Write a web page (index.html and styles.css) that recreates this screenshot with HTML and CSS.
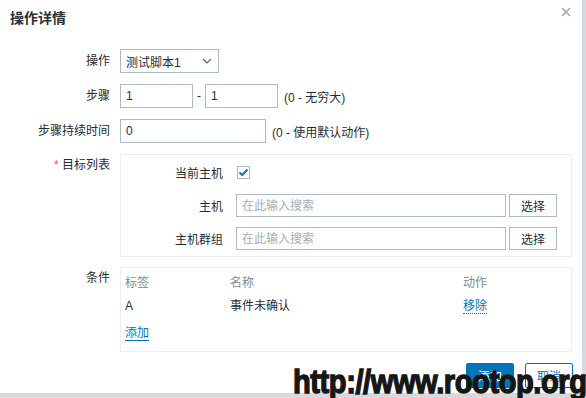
FILE: index.html
```html
<!DOCTYPE html>
<html lang="zh-CN">
<head>
  <meta charset="UTF-8">
  <title>操作详情</title>
  <link rel="stylesheet" href="styles.css">
</head>
<body>
  <div class="modal">
    <div class="modal-head">
      <h2 class="modal-title">操作详情</h2>
      <button class="close-btn" type="button">
        <svg width="10" height="10" viewBox="0 0 10 10"><path d="M1 1L9 9M9 1L1 9" stroke="#a0a8ad" stroke-width="1.6"/></svg>
      </button>
    </div>

    <form class="form">
      <!-- operation -->
      <div class="row">
        <label class="label">操作</label>
        <div class="field">
          <div class="select">
            <span>测试脚本1</span>
            <svg width="10" height="6" viewBox="0 0 10 6"><path d="M1 1L5 5L9 1" fill="none" stroke="#5a6a73" stroke-width="1.2"/></svg>
          </div>
        </div>
      </div>

      <!-- steps -->
      <div class="row">
        <label class="label">步骤</label>
        <div class="field">
          <input class="input input-step" value="1">
          <span class="dash">-</span>
          <input class="input input-step" value="1">
          <span class="hint">(0 - 无穷大)</span>
        </div>
      </div>

      <div class="row">
        <label class="label">步骤持续时间</label>
        <div class="field">
          <input class="input input-duration" value="0">
          <span class="hint">(0 - 使用默认动作)</span>
        </div>
      </div>

      <!-- targets -->
      <div class="row row-top">
        <label class="label label-box"><span class="req">*</span> 目标列表</label>
        <div class="box targets">
          <div class="sub-row">
            <span class="sub-label">当前主机</span>
            <span class="checkbox">
              <svg width="11" height="9" viewBox="0 0 11 9"><path d="M1.5 4.5L4.2 7L9.5 1.5" fill="none" stroke="#1f6fa8" stroke-width="2"/></svg>
            </span>
          </div>
          <div class="sub-row">
            <span class="sub-label">主机</span>
            <input class="input input-search" placeholder="在此输入搜索">
            <button class="btn-select" type="button">选择</button>
          </div>
          <div class="sub-row">
            <span class="sub-label">主机群组</span>
            <input class="input input-search" placeholder="在此输入搜索">
            <button class="btn-select" type="button">选择</button>
          </div>
        </div>
      </div>

      <!-- conditions -->
      <div class="row row-top">
        <label class="label label-box">条件</label>
        <div class="box conditions">
          <div class="cond-row cond-head">
            <span>标签</span>
            <span>名称</span>
            <span>动作</span>
          </div>
          <div class="cond-row">
            <span>A</span>
            <span>事件未确认</span>
            <span><a href="#" class="link-dotted">移除</a></span>
          </div>
          <div class="cond-add">
            <a href="#" class="link">添加</a>
          </div>
        </div>
      </div>
    </form>

    <div class="modal-foot">
      <button class="btn btn-primary" type="button">添加</button>
      <button class="btn btn-alt" type="button">取消</button>
    </div>
  </div>

  <div class="watermark">http://www.rootop.org</div>
</body>
</html>
```

FILE: styles.css
```css
body {
  margin: 0;
  width: 586px;
  height: 398px;
  overflow: hidden;
  background: #d6dadd;
  font-family: Arial, "Liberation Sans", "Noto Sans CJK SC", sans-serif;
  font-size: 12px;
  color: #1f2c33;
  position: relative;
}

.modal {
  width: 582px;
  height: 393px;
  background: #fff;
  box-sizing: border-box;
}

.modal-head {
  display: flex;
  justify-content: space-between;
  align-items: flex-start;
  height: 49px;
}

.modal-title {
  margin: 0;
  padding: 9px 0 0 10px;
  font-size: 14px;
  font-weight: 600;
  line-height: 18px;
  color: #2b3338;
}

.close-btn {
  border: none;
  background: none;
  padding: 0;
  margin: 7px 11px 0 0;
  width: 10px;
  height: 10px;
  display: flex;
}

.form {
  display: flex;
  flex-direction: column;
  gap: 11px;
  padding-right: 10px;
}

.row {
  display: flex;
  align-items: center;
}

.row-top {
  align-items: flex-start;
}

.row-top + .row-top {
  margin-top: -1px;
}

.label {
  width: 110px;
  padding-right: 10px;
  text-align: right;
  flex-shrink: 0;
  line-height: 24px;
}

.label-box {
  line-height: 22px;
}

.req {
  color: #e45959;
}

.field {
  display: flex;
  align-items: center;
  height: 24px;
}

.select {
  width: 99px;
  height: 24px;
  box-sizing: border-box;
  border: 1px solid #acbbc2;
  display: flex;
  align-items: center;
  justify-content: space-between;
  padding: 0 6px 0 5px;
  color: #1f2c33;
}

.input {
  height: 24px;
  box-sizing: border-box;
  border: 1px solid #acbbc2;
  padding: 0 5px;
  font: inherit;
  color: #1f2c33;
  background: #fff;
  outline: none;
}

.input::placeholder {
  color: #a3aeb4;
}

.input-step {
  width: 73px;
}

.dash {
  margin: 0 4px;
}

.input-duration {
  width: 146px;
}

.hint {
  margin-left: 6px;
  color: #1f2c33;
}

.box {
  flex: 1;
  border: 1px solid #ebeef0;
  box-sizing: border-box;
}

.targets {
  display: flex;
  flex-direction: column;
  gap: 10px;
  padding: 6px 14px 6px 0;
}

.sub-row {
  display: flex;
  align-items: center;
  height: 23px;
}

.sub-label {
  width: 115px;
  padding-right: 13px;
  box-sizing: border-box;
  text-align: right;
  flex-shrink: 0;
}

.checkbox {
  width: 13px;
  height: 13px;
  box-sizing: border-box;
  border: 1px solid #acbbc2;
  display: flex;
  align-items: center;
  justify-content: center;
  margin-left: 1px;
}

.input-search {
  flex: 1;
  height: 23px;
}

.btn-select {
  margin-left: 3px;
  width: 48px;
  height: 23px;
  border: 1px solid #acbbc2;
  background: #fff;
  font: inherit;
  color: #1f2c33;
  padding: 0;
}

.conditions {
  padding: 4px 4px 7px;
}

.cond-row {
  display: grid;
  grid-template-columns: 105px 233px auto;
  line-height: 23px;
}

.cond-head {
  color: #768d99;
}

.cond-add {
  margin-top: 4px;
  line-height: 22px;
}

.link {
  color: #0275b8;
  text-decoration: none;
  border-bottom: 1px solid #0275b8;
}

.link-dotted {
  color: #0275b8;
  text-decoration: none;
  border-bottom: 1px dotted #0275b8;
}

.modal-foot {
  display: flex;
  justify-content: flex-end;
  gap: 11px;
  padding: 11px 9px 0 0;
}

.btn {
  width: 48px;
  height: 25px;
  font: inherit;
  padding: 0;
  border-radius: 2px;
}

.btn-primary {
  background: #0275b8;
  border: 1px solid #0275b8;
  color: #fff;
}

.btn-alt {
  background: #fff;
  border: 1px solid #0275b8;
  color: #0275b8;
}

/* watermark over the bottom right */
.watermark {
  position: absolute;
  left: 293px;
  top: 364px;
  font-family: "Liberation Sans", Arial, sans-serif;
  font-weight: 700;
  font-size: 34px;
  line-height: 34px;
  color: #161616;
  -webkit-text-stroke: 1.4px #161616;
  letter-spacing: -0.5px;
  white-space: nowrap;
  transform: scaleX(0.855);
  transform-origin: left top;
}
```
